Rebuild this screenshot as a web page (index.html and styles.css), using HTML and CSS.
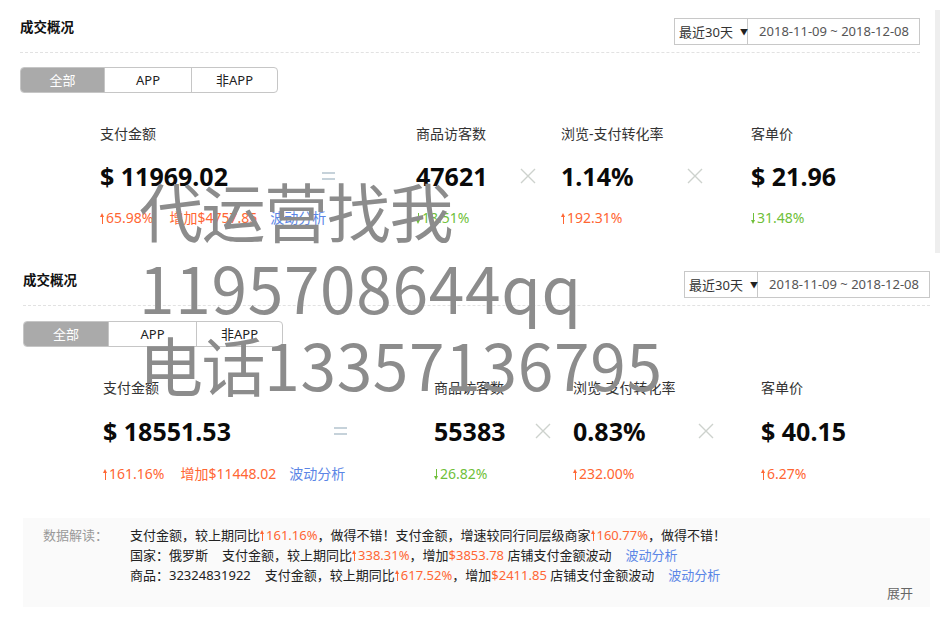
FILE: index.html
```html
<!DOCTYPE html>
<html lang="zh-CN">
<head>
<meta charset="utf-8">
<title>成交概况</title>
<link rel="stylesheet" href="styles.css">
</head>
<body>
<div class="page">
  <section class="panel panel-a">
    <div class="panel-main">
      <div class="head">
        <h2 class="title">成交概况</h2>
        <div class="picker"><span class="sel">最近30天<i class="caret">▼</i></span><span class="range">2018-11-09 ~ 2018-12-08</span></div>
      </div>
      <div class="tabs"><span class="tab tab-all on">全部</span><span class="tab tab-app">APP</span><span class="tab tab-non">非APP</span></div>
      <div class="metrics">
        <div class="metric">
          <div class="label">支付金额</div>
          <div class="value">$ 11969.02</div>
          <div class="change"><span class="up"><i class="arr"></i>65.98%</span><span class="inc">增加$4757.85</span><span class="link">波动分析</span></div>
        </div>
        <div class="op"><svg class="eq" width="13" height="8" viewBox="0 0 13 8"><rect x="0" y="0" width="13" height="2"/><rect x="0" y="6" width="13" height="2"/></svg></div>
        <div class="metric">
          <div class="label">商品访客数</div>
          <div class="value">47621</div>
          <div class="change"><span class="down"><i class="arr arr-down"></i>18.51%</span></div>
        </div>
        <div class="op"><svg class="times" width="16" height="16" viewBox="0 0 16 16"><path d="M1 1L15 15M15 1L1 15"/></svg></div>
        <div class="metric">
          <div class="label">浏览-支付转化率</div>
          <div class="value">1.14%</div>
          <div class="change"><span class="up"><i class="arr"></i>192.31%</span></div>
        </div>
        <div class="op"><svg class="times" width="16" height="16" viewBox="0 0 16 16"><path d="M1 1L15 15M15 1L1 15"/></svg></div>
        <div class="metric">
          <div class="label">客单价</div>
          <div class="value">$ 21.96</div>
          <div class="change"><span class="down"><i class="arr arr-down"></i>31.48%</span></div>
        </div>
      </div>
    </div>
    <div class="scroll"></div>
  </section>

  <section class="panel panel-b">
    <div class="panel-main">
      <div class="head">
        <h2 class="title">成交概况</h2>
        <div class="picker"><span class="sel">最近30天<i class="caret">▼</i></span><span class="range">2018-11-09 ~ 2018-12-08</span></div>
      </div>
      <div class="tabs"><span class="tab tab-all on">全部</span><span class="tab tab-app">APP</span><span class="tab tab-non">非APP</span></div>
      <div class="metrics">
        <div class="metric">
          <div class="label">支付金额</div>
          <div class="value">$ 18551.53</div>
          <div class="change"><span class="up"><i class="arr"></i>161.16%</span><span class="inc">增加$11448.02</span><span class="link">波动分析</span></div>
        </div>
        <div class="op"><svg class="eq" width="13" height="8" viewBox="0 0 13 8"><rect x="0" y="0" width="13" height="2"/><rect x="0" y="6" width="13" height="2"/></svg></div>
        <div class="metric">
          <div class="label">商品访客数</div>
          <div class="value">55383</div>
          <div class="change"><span class="down"><i class="arr arr-down"></i>26.82%</span></div>
        </div>
        <div class="op"><svg class="times" width="16" height="16" viewBox="0 0 16 16"><path d="M1 1L15 15M15 1L1 15"/></svg></div>
        <div class="metric">
          <div class="label">浏览-支付转化率</div>
          <div class="value">0.83%</div>
          <div class="change"><span class="up"><i class="arr"></i>232.00%</span></div>
        </div>
        <div class="op"><svg class="times" width="16" height="16" viewBox="0 0 16 16"><path d="M1 1L15 15M15 1L1 15"/></svg></div>
        <div class="metric">
          <div class="label">客单价</div>
          <div class="value">$ 40.15</div>
          <div class="change"><span class="up"><i class="arr"></i>6.27%</span></div>
        </div>
      </div>

      <div class="insight">
        <div class="insight-row">
          <div class="insight-label">数据解读：</div>
          <div class="insight-lines">
            <p>支付金额，较上期同比<span class="hl"><i class="arr"></i>161.16%</span>，做得不错！支付金额，增速较同行同层级商家<span class="hl"><i class="arr"></i>160.77%</span>，做得不错！</p>
            <p><span class="gap">国家：俄罗斯</span>支付金额，较上期同比<span class="hl"><i class="arr"></i>338.31%</span>，增加<span class="hl">$3853.78</span> 店铺支付金额波动<span class="link">波动分析</span></p>
            <p><span class="gap">商品：32324831922</span>支付金额，较上期同比<span class="hl"><i class="arr"></i>617.52%</span>，增加<span class="hl">$2411.85</span> 店铺支付金额波动<span class="link">波动分析</span></p>
          </div>
        </div>
        <div class="insight-more">展开</div>
      </div>
    </div>
  </section>

  <div class="watermark">
    <div><span class="wm-cjk">代运营找我</span></div>
    <div><span class="wm-num">1195708644qq</span></div>
    <div><span class="wm-cjk">电话</span><span class="wm-num">13357136795</span></div>
  </div>
</div>
</body>
</html>
```

FILE: styles.css
```css
* { box-sizing: border-box; }
html, body { margin: 0; padding: 0; background: #fff; }
body {
  font-family: "Noto Sans", "Noto Sans CJK SC", sans-serif;
  color: #333;
  font-size: 13px;
  width: 949px;
  height: 623px;
  overflow: hidden;
}
.page { position: relative; width: 949px; height: 623px; }

.panel { display: flex; }
.panel-main { flex: none; padding-top: 18px; }
.panel-a .panel-main { margin-left: 20px; width: 900px; padding-bottom: 25px; }
.panel-b .panel-main { margin-left: 23px; width: 907px; }

.scroll { flex: none; width: 5px; margin-left: 15px; margin-top: 10px; background: #eeeeee; }

.head {
  display: flex;
  justify-content: space-between;
  align-items: flex-start;
  padding-bottom: 7px;
  border-bottom: 1px dashed #e2e2e2;
}
.title {
  margin: 0;
  font-size: 13.5px;
  line-height: 18px;
  font-weight: bold;
  color: #111;
}
.picker {
  display: flex;
  height: 27px;
  border: 1px solid #c8c8c8;
  font-size: 13px;
  line-height: 25px;
}
.sel {
  width: 73px;
  padding-left: 4px;
  color: #333;
  border-right: 1px solid #c8c8c8;
  white-space: nowrap;
}
.caret { font-style: normal; font-size: 8px; margin-left: 7px; vertical-align: 2px; color: #222; }
.range { padding: 0 10px 0 11px; color: #555; white-space: nowrap; }

.tabs {
  display: flex;
  width: max-content;
  margin-top: 14px;
  height: 26px;
  border: 1px solid #c6c6c6;
  border-radius: 4px;
  overflow: hidden;
}
.panel-b .tabs { margin-top: 15px; }
.tab {
  text-align: center;
  font-size: 13px;
  line-height: 24px;
  color: #222;
}
.tab + .tab { border-left: 1px solid #c6c6c6; }
.tab-all { width: 83px; }
.tab-app { width: 87px; }
.tab-non { width: 86px; }
.panel-b .tab-all { width: 84px; }
.panel-b .tab-app { width: 88px; }
.tab.on { background: #aaaaaa; color: #fff; }

.metrics {
  display: grid;
  margin-left: 80px;
  margin-top: 31px;
}
.panel-a .metrics { grid-template-columns: 140px 176px 79px 66px 78px 112px auto; }
.panel-b .metrics { grid-template-columns: 143px 188px 79px 60px 78px 110px auto; }

.metric { white-space: nowrap; }
.label { font-size: 14px; line-height: 20px; color: #333; }
.value {
  margin-top: 16px;
  font-size: 25px;
  line-height: 32px;
  font-weight: bold;
  color: #0a0a0a;
}
.change { margin-top: 16px; font-size: 14px; line-height: 20px; }
.panel-b .value, .panel-b .change { margin-top: 17px; }

.up, .inc, .hl { color: #ff6633; }
.down { color: #6fbf3a; }
.inc { margin-left: 16px; }
.link { color: #5b86e6; margin-left: 13px; }

.op {
  display: flex;
  justify-content: center;
  align-items: center;
  height: 32px;
  margin-top: 36px;
}
.panel-b .op { margin-top: 37px; }
.eq { fill: #c6d2da; }
.times { stroke: #cdd2cd; stroke-width: 1.4; fill: none; }

.arr {
  display: inline-block;
  position: relative;
  width: 5px;
  height: 11px;
  margin-right: 1px;
  vertical-align: -1px;
}
.arr::before {
  content: "";
  position: absolute;
  left: 2px;
  top: 2px;
  width: 1px;
  height: 9px;
  background: currentColor;
}
.arr::after {
  content: "";
  position: absolute;
  left: 0;
  top: 0;
  border-left: 2.5px solid transparent;
  border-right: 2.5px solid transparent;
  border-bottom: 4px solid currentColor;
}
.arr-down { transform: scaleY(-1); }

.insight {
  margin-top: 34px;
  background: #fafafa;
  padding: 7px 17px 6px 20px;
  font-size: 13px;
}
.insight-row { display: flex; }
.insight-label { width: 87px; flex: none; color: #999; line-height: 20px; }
.insight-lines p { margin: 0; line-height: 20px; color: #222; white-space: nowrap; }
.insight-lines .link { margin-left: 14px; }
.gap { margin-right: 14px; }
.insight-more { text-align: right; color: #666; line-height: 16px; }

.watermark {
  position: absolute;
  left: 139px;
  top: 171px;
  font-family: "Noto Sans CJK SC", sans-serif;
  font-size: 64px;
  line-height: 77px;
  color: #8c8c8c;
  white-space: nowrap;
  pointer-events: none;
}
.wm-cjk { letter-spacing: -1.4px; }
.wm-num { letter-spacing: 0.7px; }
```
